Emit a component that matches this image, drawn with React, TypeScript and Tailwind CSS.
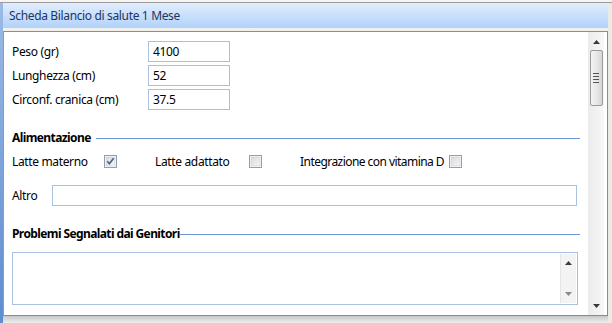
import React from "react";

const font = { fontFamily: '"Noto Sans", "Open Sans", sans-serif' };

function Checkbox({ checked }: { checked?: boolean }) {
  return (
    <svg width="13" height="13" viewBox="0 0 13 13" className="shrink-0">
      <defs>
        <linearGradient id={checked ? "cbg1" : "cbg0"} x1="0" y1="0" x2="1" y2="1">
          <stop offset="0" stopColor="#d6d9de" />
          <stop offset="1" stopColor="#f6f7f8" />
        </linearGradient>
      </defs>
      <rect x="0.5" y="0.5" width="12" height="12" fill="#fff" stroke="#8e9fb8" />
      <rect x="2" y="2" width="9" height="9" fill={`url(#${checked ? "cbg1" : "cbg0"})`} stroke="#c3c8d0" strokeWidth="0.6" />
      {checked && (
        <path d="M3.3 6.3 L5.4 8.8 L9.6 3.2" fill="none" stroke="#4a5f80" strokeWidth="1.6" />
      )}
    </svg>
  );
}

function Input({ value, className }: { value?: string; className: string }) {
  return (
    <div className={`h-[21px] border border-[#a9c0e0] bg-white flex items-center pl-[4px] text-[12px] text-black ${className}`}>
      {value}
    </div>
  );
}

function Section({ title, lineClass }: { title: string; lineClass?: string }) {
  return (
    <div className="flex items-center">
      <span className="font-bold text-[12px] tracking-[-0.6px] text-black leading-none whitespace-nowrap">{title}</span>
      <div className={`flex-1 h-px bg-[#6b98d2] ${lineClass ?? ""}`} />
    </div>
  );
}

function UpArrow() {
  return (
    <svg width="7" height="4" viewBox="0 0 7 4">
      <path d="M0 4 L3.5 0 L7 4 Z" fill="#3a3a3a" />
    </svg>
  );
}
function DownArrow({ color = "#3a3a3a" }: { color?: string }) {
  return (
    <svg width="7" height="4" viewBox="0 0 7 4">
      <path d="M0 0 L3.5 4 L7 0 Z" fill={color} />
    </svg>
  );
}

export default function App() {
  return (
    <div className="w-[612px] h-[323px] bg-[#ebeae4] flex flex-col overflow-hidden" style={font}>
      <div className="h-[3px] bg-[#f4f4f4] border-b border-[#9c9c9c] shrink-0" />
      <div className="flex-1 flex min-h-0">
        <div className="w-[3px] bg-gradient-to-b from-[#9bbbe6] to-[#5e8dcf] shrink-0" />
        <div className="flex-1 flex flex-col min-w-0 pr-[4px]">
          <div className="h-[25px] bg-gradient-to-b from-[#e2edfc] to-[#b1d2fb] flex items-center pl-[6px] text-[12px] tracking-[-0.35px] text-[#1c3563] shrink-0">
            Scheda Bilancio di salute 1 Mese
          </div>
          <div className="h-[4px] bg-[#f1f0ea] border-b border-[#8d8d8d] shrink-0" />
          <div className="h-[284px] bg-white border-l border-[#9a9a9a] border-r border-r-[#8d8d8d] border-b border-b-[#8a8a8a] flex shrink-0 relative">
            <div className="flex-1 pl-[8px] pr-[8px] text-[12px] tracking-[-0.35px] text-black whitespace-nowrap">
              <div className="flex flex-col gap-[3px] pt-[9px]">
                <div className="flex items-center">
                  <span className="w-[136px]">Peso (gr)</span>
                  <Input value="4100" className="w-[82px]" />
                </div>
                <div className="flex items-center">
                  <span className="w-[136px]">Lunghezza (cm)</span>
                  <Input value="52" className="w-[82px]" />
                </div>
                <div className="flex items-center">
                  <span className="w-[136px]">Circonf. cranica (cm)</span>
                  <Input value="37.5" className="w-[82px]" />
                </div>
              </div>
              <div className="mt-[22px]">
                <Section title="Alimentazione" lineClass="ml-[5px]" />
              </div>
              <div className="flex items-center mt-[9px] h-[17px]">
                <span className="w-[92px]">Latte materno</span>
                <Checkbox checked />
                <span className="ml-[38px] w-[94px]">Latte adattato</span>
                <Checkbox />
                <span className="ml-[38px] w-[149px] tracking-[-0.55px]">Integrazione con vitamina D</span>
                <Checkbox />
              </div>
              <div className="flex items-center mt-[15px]">
                <span className="w-[40px]">Altro</span>
                <Input className="flex-1 mr-[3px]" />
              </div>
              <div className="mt-[22px]">
                <Section title="Problemi Segnalati dai Genitori" />
              </div>
              <div className="mt-[12px] mr-[2px] h-[53px] border border-[#a9c0e0] flex justify-end p-[1px]">
                <div className="w-[16px] bg-[#f3f3f3] border-l border-[#e4e4e4] flex flex-col items-center justify-between py-[7px]">
                  <UpArrow />
                  <DownArrow color="#8a8a8a" />
                </div>
              </div>
            </div>
            <div className="w-[16px] bg-gradient-to-r from-[#ececec] to-[#f7f7f7] flex flex-col items-center shrink-0 mr-[3px]">
              <div className="h-[18px] flex items-center justify-center pt-[1px]">
                <UpArrow />
              </div>
              <div className="w-[13px] h-[56px] rounded-[2px] border border-[#9b9b9b] bg-gradient-to-r from-[#f3f3f3] via-[#e8e8e8] to-[#d5d5d5] flex flex-col items-center justify-center gap-[2px]">
                <div className="w-[6px] h-px bg-[#555]" />
                <div className="w-[6px] h-px bg-[#555]" />
                <div className="w-[6px] h-px bg-[#555]" />
                <div className="w-[6px] h-px bg-[#555]" />
              </div>
              <div className="flex-1" />
              <div className="h-[18px] flex items-center justify-center">
                <DownArrow />
              </div>
            </div>
          </div>
          <div className="flex-1 bg-gradient-to-b from-[#c8c8c8] to-[#eeeeee]" />
        </div>
      </div>
    </div>
  );
}
